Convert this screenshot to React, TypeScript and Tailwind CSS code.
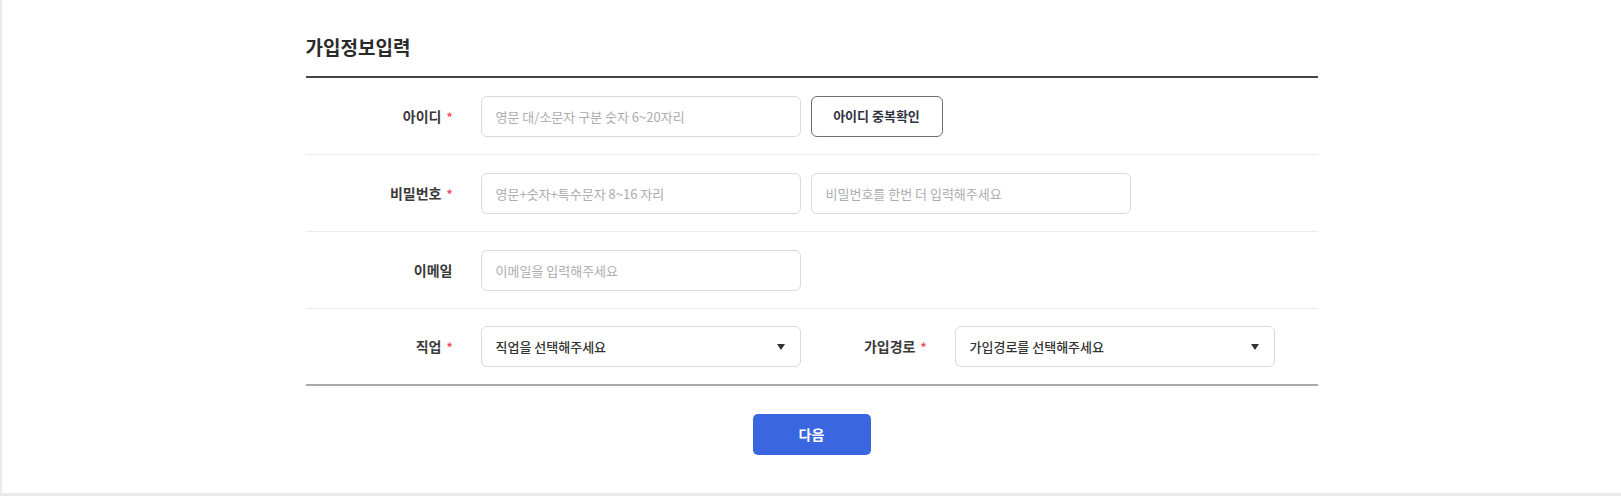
import React from "react";

const font = { fontFamily: '"Noto Sans CJK KR", "Noto Sans", sans-serif' };

function Label({ text, required, width = "w-[147px]" }: { text: string; required?: boolean; width?: string }) {
  return (
    <div className={`${width} shrink-0 text-right text-[14px] font-semibold text-[#3a3a3a]`}>
      {text}
      {required && <span className="ml-[5px] text-[#ef4f5a] text-[12px]">*</span>}
    </div>
  );
}

function TextInput({ placeholder }: { placeholder: string }) {
  return (
    <input
      type="text"
      placeholder={placeholder}
      className="w-[320px] h-[41px] shrink-0 rounded-[6px] border border-[#dadada] px-[14px] text-[13px] text-[#333] placeholder:text-[#adadad] outline-none"
      style={font}
    />
  );
}

function Select({ text }: { text: string }) {
  return (
    <div className="w-[320px] h-[41px] shrink-0 flex items-center justify-between rounded-[6px] border border-[#dadada] pl-[14px] pr-[15px] text-[13px] font-medium text-[#333]">
      <span>{text}</span>
      <svg width="8" height="6" viewBox="0 0 8 6">
        <path d="M0 0 H8 L4 6 Z" fill="#333" />
      </svg>
    </div>
  );
}

export default function App() {
  return (
    <div className="h-[496px] w-full bg-[#ebebeb] pl-[2px] pb-[3px]" style={font}>
      <div className="h-full bg-white">
        <div className="w-[1012px] mx-auto pt-[34px]">
          <h2 className="text-[19px] leading-[26px] font-semibold text-[#2a2a2a]">가입정보입력</h2>
          <div className="mt-[16px] border-t-2 border-[#444]">
            <div className="h-[77px] flex items-center border-b border-[#ececec]">
              <Label text="아이디" required />
              <div className="ml-[28px] flex gap-[10px]">
                <TextInput placeholder="영문 대/소문자 구분 숫자 6~20자리" />
                <button className="w-[132px] h-[41px] rounded-[6px] border border-[#6b6f78] text-[13px] font-semibold text-[#2f3340]">
                  아이디 중복확인
                </button>
              </div>
            </div>
            <div className="h-[77px] flex items-center border-b border-[#ececec]">
              <Label text="비밀번호" required />
              <div className="ml-[28px] flex gap-[10px]">
                <TextInput placeholder="영문+숫자+특수문자 8~16 자리" />
                <TextInput placeholder="비밀번호를 한번 더 입력해주세요" />
              </div>
            </div>
            <div className="h-[77px] flex items-center border-b border-[#ececec]">
              <Label text="이메일" />
              <div className="ml-[28px] flex">
                <TextInput placeholder="이메일을 입력해주세요" />
              </div>
            </div>
            <div className="h-[77px] flex items-center border-b-2 border-[#aaa]">
              <Label text="직업" required />
              <div className="ml-[28px]">
                <Select text="직업을 선택해주세요" />
              </div>
              <Label text="가입경로" required width="w-[126px]" />
              <div className="ml-[28px]">
                <Select text="가입경로를 선택해주세요" />
              </div>
            </div>
          </div>
          <div className="flex justify-center mt-[28px]">
            <button className="w-[118px] h-[41px] rounded-[5px] bg-[#3a66df] text-white text-[14px] font-semibold">
              다음
            </button>
          </div>
        </div>
      </div>
    </div>
  );
}
